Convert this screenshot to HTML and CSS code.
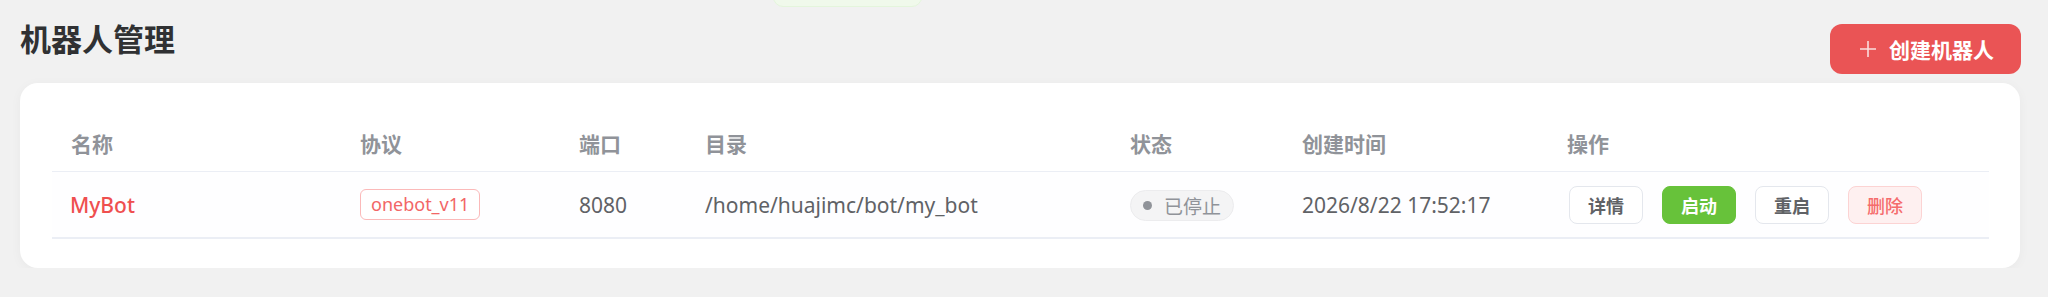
FILE: index.html
```html
<!DOCTYPE html>
<html lang="zh-CN">
<head>
    <meta charset="UTF-8">
    <meta name="viewport" content="width=device-width, initial-scale=1.0">
    <title>机器人管理</title>
    <link rel="stylesheet" href="styles.css">
</head>
<body>
    <div class="toast"></div>

    <div class="page">
        <div class="page-header">
            <h1 class="page-title">机器人管理</h1>
            <button class="create-button">
                <svg class="plus-icon" viewBox="0 0 18 18" width="18" height="18">
                    <path d="M9 1v16M1 9h16" stroke="currentColor" stroke-width="1.6" fill="none"/>
                </svg>
                <span>创建机器人</span>
            </button>
        </div>

        <div class="card">
            <table class="bot-table">
                <colgroup>
                    <col style="width: 289px">
                    <col style="width: 219px">
                    <col style="width: 126px">
                    <col style="width: 425px">
                    <col style="width: 172px">
                    <col style="width: 265px">
                    <col>
                </colgroup>
                <thead>
                    <tr>
                        <th>名称</th>
                        <th>协议</th>
                        <th>端口</th>
                        <th>目录</th>
                        <th>状态</th>
                        <th>创建时间</th>
                        <th>操作</th>
                    </tr>
                </thead>
                <tbody>
                    <tr>
                        <td><span class="bot-name">MyBot</span></td>
                        <td><span class="protocol-tag">onebot_v11</span></td>
                        <td>8080</td>
                        <td>/home/huajimc/bot/my_bot</td>
                        <td><span class="status-badge"><span class="status-dot"></span>已停止</span></td>
                        <td>2026/8/22 17:52:17</td>
                        <td>
                            <div class="actions">
                                <button class="small-button">详情</button>
                                <button class="small-button success">启动</button>
                                <button class="small-button">重启</button>
                                <button class="small-button danger">删除</button>
                            </div>
                        </td>
                    </tr>
                </tbody>
            </table>
        </div>
    </div>
</body>
</html>
```

FILE: styles.css
```css
body {
    margin: 0;
    background-color: #f1f1f1;
    font-family: "Noto Sans", "Noto Sans CJK SC", sans-serif;
    color: #606266;
}

.toast {
    position: absolute;
    top: -40px;
    left: 773px;
    width: 147px;
    height: 45px;
    background-color: #f0f9eb;
    border: 1px solid #e4f5dc;
    border-radius: 10px;
}

.page {
    padding: 0 28px 0 20px;
}

.page-header {
    display: flex;
    justify-content: space-between;
    align-items: flex-start;
    height: 83px;
}

.page-title {
    margin: 22px 0 0;
    font-size: 31px;
    line-height: 31px;
    font-weight: 700;
    color: #303133;
    font-family: "Noto Sans CJK SC", sans-serif;
}

.create-button {
    display: flex;
    align-items: center;
    gap: 12px;
    margin-top: 24px;
    margin-right: -1px;
    height: 50px;
    padding: 0 27px 0 29px;
    background-color: #ea5455;
    color: white;
    border: none;
    border-radius: 12px;
    font-family: "Noto Sans CJK SC", sans-serif;
    font-size: 21px;
    font-weight: 700;
    cursor: pointer;
}

.plus-icon {
    opacity: 0.8;
}

.card {
    background-color: #fff;
    border-radius: 18px;
    padding: 31px 31px 29px 32px;
    box-shadow: 0 2px 12px rgba(0, 0, 0, 0.04);
}

.bot-table {
    width: 100%;
    border-collapse: collapse;
    table-layout: fixed;
}

.bot-table th,
.bot-table td {
    text-align: left;
    padding: 0 19px;
    white-space: nowrap;
}

.bot-table th {
    height: 57px;
    font-family: "Noto Sans CJK SC", sans-serif;
    font-size: 21px;
    font-weight: 700;
    color: #909399;
    border-bottom: 1px solid #ebeef5;
}

.bot-table td {
    height: 65px;
    font-size: 21px;
    color: #606266;
    border-bottom: 2px solid #ebeef5;
}

.bot-table tbody tr {
    background-color: #fefeff;
}

.bot-name {
    color: #ef4f4f;
    font-weight: 500;
    margin-left: -1px;
}

.protocol-tag {
    display: inline-block;
    height: 29px;
    line-height: 28px;
    padding: 0 10px;
    border: 1px solid #fbb9b9;
    border-radius: 6px;
    color: #f26666;
    font-size: 18px;
    background-color: #fff;
}

.status-badge {
    display: inline-flex;
    align-items: center;
    gap: 12px;
    height: 29px;
    padding: 0 12px;
    border: 1px solid #ececee;
    border-radius: 16px;
    background-color: #f4f4f5;
    color: #909399;
    font-family: "Noto Sans CJK SC", sans-serif;
    font-size: 19px;
}

.status-dot {
    width: 9px;
    height: 9px;
    border-radius: 50%;
    background-color: #909399;
}

.actions {
    display: flex;
    gap: 19px;
    margin-left: 2px;
}

.small-button {
    height: 38px;
    width: 74px;
    padding: 0;
    background-color: #fff;
    color: #606266;
    border: 1px solid #e4e7ed;
    border-radius: 8px;
    font-family: "Noto Sans CJK SC", sans-serif;
    font-size: 18px;
    font-weight: 700;
    cursor: pointer;
}

.small-button.success {
    background-color: #67c23a;
    border-color: #67c23a;
    color: #fff;
}

.small-button.danger {
    background-color: #fef0f0;
    border-color: #fcd3d3;
    color: #f56c6c;
    font-weight: 500;
}
```
